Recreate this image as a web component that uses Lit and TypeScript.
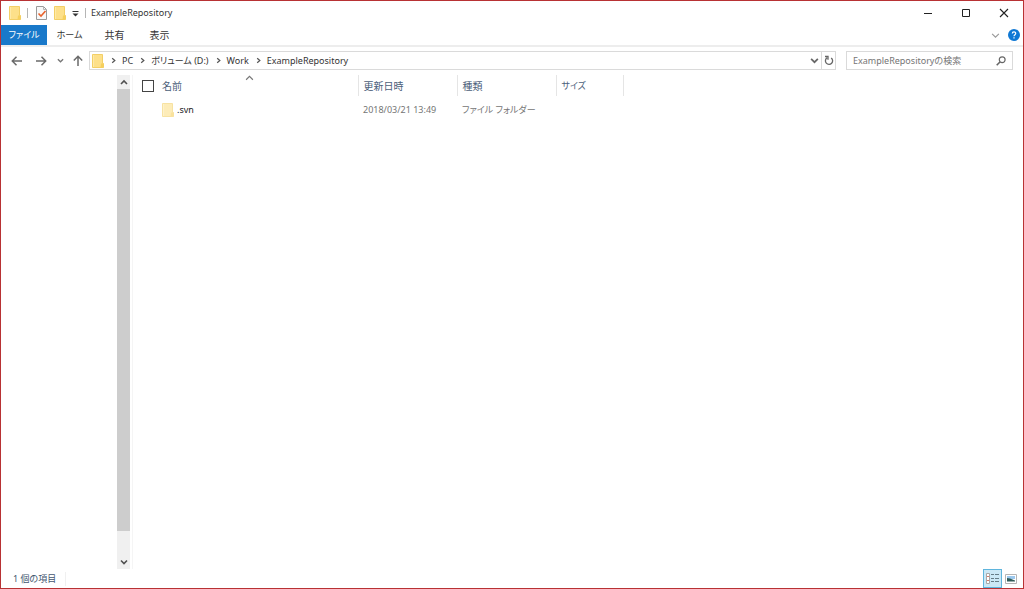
import { LitElement, html, css, svg } from "lit";
import { customElement, property, state } from "lit/decorators.js";

@customElement("folder-icon")
class FolderIcon extends LitElement {
  @property({ type: Boolean, reflect: true }) faded = false;

  static styles = css`
    :host { display: block; flex: none; width: 12px; height: 14px; }
    :host([faded]) { opacity: 0.6; }
    svg { display: block; }
  `;

  render() {
    return html`<svg width="12" height="14" viewBox="0 0 12 14" aria-hidden="true">
      <path d="M0.5 0.5H10.5V9.5H11.5V13.5H0.5Z" fill="#fde08a" stroke="#f3cf66" />
      <path d="M1.5 1V13" stroke="#feeaa8" />
      <path d="M9 9.5H11.5V13.5H8.5Z" fill="#f6d05c" />
    </svg>`;
  }
}

type Row = { name: string; date: string; kind: string; size: string };
type Tab = { label: string; kanji: boolean };

@customElement("app-root")
export class AppRoot extends LitElement {
  @state() private path = ["PC", "ボリューム (D:)", "Work", "ExampleRepository"];
  @state() private tabs: Tab[] = [
    { label: "ホーム", kanji: false },
    { label: "共有", kanji: true },
    { label: "表示", kanji: true },
  ];
  @state() private rows: Row[] = [
    { name: ".svn", date: "2018/03/21 13:49", kind: "ファイル フォルダー", size: "" },
  ];

  static styles = css`
    :host {
      display: flex;
      flex-direction: column;
      box-sizing: border-box;
      height: 100vh;
      border: 1px solid #b83234;
      background: #fff;
      color: #333;
      font: 9px/14px "Noto Sans", "Noto Sans CJK JP", sans-serif;
      font-feature-settings: "palt";
    }
    * { box-sizing: border-box; }
    svg { display: block; flex: none; }
    button, input {
      margin: 0;
      padding: 0;
      border: 0;
      background: none;
      color: inherit;
      font: inherit;
      font-feature-settings: inherit;
    }
    button { display: flex; align-items: center; justify-content: center; }
    .kanji { font-size: 10px; }

    .title-bar { display: flex; align-items: center; flex: none; height: 24px; }
    .quick { display: flex; align-items: center; gap: 6px; padding-left: 8px; }
    .page { padding-left: 1px; }
    .divider { width: 1px; height: 10px; background: #b5b5b5; }
    .title { flex: 1; margin: 0 0 0 5px; font-size: 9px; font-weight: 400; }
    .window-button { width: 38px; height: 24px; }

    .ribbon { display: flex; flex: none; height: 22px; border-bottom: 2px solid #ededed; }
    .tab { width: 45px; height: 20px; white-space: nowrap; }
    .file { width: 46px; background: #1979ca; color: #fff; }
    .ribbon-end { display: flex; align-items: center; gap: 8px; margin-left: auto; padding-right: 3px; }

    .nav { display: flex; align-items: center; flex: none; height: 27px; padding: 0 10px 0 4px; }
    .arrows { display: flex; align-items: center; }
    .arrows button { width: 24px; height: 19px; }
    .arrows .recent { width: 14px; }
    .arrows .up { width: 22px; }
    .address { display: flex; align-items: center; flex: 1; height: 19px; border: 1px solid #dadada; padding-left: 2px; }
    .crumbs { display: flex; align-items: center; flex: 1; margin: 0; padding: 0; list-style: none; }
    .crumbs li { display: flex; align-items: center; }
    .crumbs svg { margin: 0 5px 0 6px; }
    .crumbs a { color: inherit; text-decoration: none; white-space: nowrap; }
    .drop { width: 13px; height: 17px; }
    .refresh { width: 14px; height: 17px; border-left: 1px solid #dadada; }
    .search { display: flex; align-items: center; width: 167px; height: 19px; margin-left: 10px; padding: 0 6px; border: 1px solid #dadada; }
    .search input { flex: 1; min-width: 0; outline: none; }
    .search input::placeholder { color: #757575; opacity: 1; }

    .body { display: flex; flex: 1; min-height: 0; padding-top: 1px; }
    .tree { width: 116px; }
    .scrollbar { display: flex; flex-direction: column; width: 13px; background: #f0f0f0; }
    .scroll-button { width: 13px; height: 14px; }
    .thumb { flex: 1; margin-bottom: 24px; background: #cdcdcd; }
    .files { flex: 1; margin-left: 2px; border-left: 1px solid #f5f5f5; }

    table { width: 491px; border-collapse: collapse; table-layout: fixed; }
    th, td { padding: 0 0 0 5px; text-align: left; font-weight: 400; white-space: nowrap; }
    th { position: relative; height: 21px; border-right: 1px solid #e5e5e5; color: #4c607a; }
    td { height: 28px; color: #757575; }
    .col-name { width: 225px; }
    .col-date, .col-kind { width: 99px; }
    .name-cell { display: flex; align-items: center; gap: 8px; padding-left: 4px; }
    .name-cell input {
      appearance: none;
      width: 12px;
      height: 12px;
      border: 1px solid #444;
      background: #fff;
    }
    .item { display: flex; align-items: center; gap: 3px; padding-left: 24px; color: #222; }
    .sort { position: absolute; top: -2px; left: 50%; }

    .status { display: flex; align-items: center; justify-content: space-between; flex: none; height: 19px; padding: 0 4px 0 12px; color: #42566e; }
    .count { padding-right: 9px; border-right: 1px solid #f0f0f0; }
    .views { display: flex; }
    .view { width: 17px; height: 19px; }
    .view.active { width: 19px; border: 1px solid #5fb5dd; background: #cbe8f6; }
  `;

  private chevron(dir: "up" | "down" | "right", size: number, color: string, width = 1) {
    const d = {
      up: "M1 6L4 3L7 6",
      down: "M1 2.5L4 5.5L7 2.5",
      right: "M2.5 1.5L5.5 4L2.5 6.5",
    }[dir];
    return html`<svg width=${size} height=${size} viewBox="0 0 8 8" aria-hidden="true">
      <path d=${d} fill="none" stroke=${color} stroke-width=${width} />
    </svg>`;
  }

  private arrow(angle: number) {
    return html`<svg width="12" height="12" viewBox="0 0 12 12" aria-hidden="true">
      ${svg`<path d="M11 6H1.5M5.5 1.8L1.3 6L5.5 10.2" transform="rotate(${angle} 6 6)" fill="none" stroke="#6a6a6a" stroke-width="1.5" />`}
    </svg>`;
  }

  render() {
    return html`
      <header class="title-bar">
        <div class="quick">
          <folder-icon></folder-icon>
          <span class="divider"></span>
          <button class="page" aria-label="プロパティ">
            <svg width="13" height="14" viewBox="0 0 13 14">
              <path d="M1.5 0.5H8.5L11.5 3.5V13.5H1.5Z" fill="#f8f8f8" stroke="#999" />
              <path d="M8.5 0.5V3.5H11.5" fill="none" stroke="#b5b5b5" />
              <path d="M3.5 7.5L6 10L10.5 5" fill="none" stroke="#e8622c" stroke-width="1.6" />
            </svg>
          </button>
          <button aria-label="新しいフォルダー"><folder-icon></folder-icon></button>
          <button aria-label="クイック アクセス ツール バーのカスタマイズ">
            <svg width="7" height="7" viewBox="0 0 7 7">
              <path d="M0.5 1.5H6.5" stroke="#333" />
              <path d="M0.5 3.5H6.5L3.5 6.5Z" fill="#333" />
            </svg>
          </button>
          <span class="divider"></span>
        </div>
        <h1 class="title">ExampleRepository</h1>
        <button class="window-button" aria-label="最小化">
          <svg width="10" height="10" viewBox="0 0 10 10"><path d="M1 5.5H9" stroke="#222" /></svg>
        </button>
        <button class="window-button" aria-label="最大化">
          <svg width="10" height="10" viewBox="0 0 10 10"><path d="M1.5 1.5H8.5V8.5H1.5Z" fill="none" stroke="#222" /></svg>
        </button>
        <button class="window-button" aria-label="閉じる">
          <svg width="10" height="10" viewBox="0 0 10 10"><path d="M1 1L9 9M9 1L1 9" stroke="#222" stroke-width="1.1" /></svg>
        </button>
      </header>

      <nav class="ribbon">
        <button class="tab file">ファイル</button>
        ${this.tabs.map((t) => html`<button class="tab ${t.kanji ? "kanji" : ""}">${t.label}</button>`)}
        <div class="ribbon-end">
          <button aria-label="リボンの展開">${this.chevron("down", 9, "#999")}</button>
          <button aria-label="ヘルプ">
            <svg width="12" height="12" viewBox="0 0 12 12">
              <circle cx="6" cy="6" r="6" fill="#0f78d4" />
              <path d="M4.3 4.6C4.3 2.4 7.7 2.4 7.7 4.5C7.7 5.7 6 5.7 6 7.3M6 8.3V9.5" fill="none" stroke="#fff" stroke-width="1.2" />
            </svg>
          </button>
        </div>
      </nav>

      <div class="nav">
        <div class="arrows">
          <button aria-label="戻る">${this.arrow(0)}</button>
          <button aria-label="進む">${this.arrow(180)}</button>
          <button class="recent" aria-label="最近表示した場所">${this.chevron("down", 7, "#777", 1.5)}</button>
          <button class="up" aria-label="上へ">${this.arrow(90)}</button>
        </div>
        <div class="address">
          <folder-icon></folder-icon>
          <ol class="crumbs">
            ${this.path.map((p) => html`<li>${this.chevron("right", 7, "#555", 1.4)}<a href="#">${p}</a></li>`)}
          </ol>
          <button class="drop" aria-label="以前の場所">${this.chevron("down", 9, "#666", 1.5)}</button>
          <button class="refresh" aria-label="更新">
            <svg width="10" height="11" viewBox="0 0 10 11">
              <path d="M3 2.8A3.6 3.6 0 1 0 7.2 2.9M1 1.5H4V4.8" fill="none" stroke="#666" stroke-width="1.3" />
            </svg>
          </button>
        </div>
        <label class="search">
          <input type="text" aria-label="検索" placeholder="ExampleRepositoryの検索" />
          <svg width="10" height="10" viewBox="0 0 10 10">
            <circle cx="6.2" cy="3.7" r="2.9" fill="none" stroke="#666" stroke-width="1.2" />
            <path d="M4.2 5.8L0.7 9.3" stroke="#666" stroke-width="1.6" />
          </svg>
        </label>
      </div>

      <main class="body">
        <aside class="tree"></aside>
        <div class="scrollbar">
          <button class="scroll-button" aria-label="上にスクロール">${this.chevron("up", 8, "#505050", 1.6)}</button>
          <div class="thumb"></div>
          <button class="scroll-button" aria-label="下にスクロール">${this.chevron("down", 8, "#505050", 1.6)}</button>
        </div>
        <section class="files">
          <table>
            <colgroup>
              <col class="col-name" /><col class="col-date" /><col class="col-kind" /><col />
            </colgroup>
            <thead>
              <tr>
                <th class="kanji">
                  <div class="name-cell"><input type="checkbox" aria-label="すべて選択" />名前</div>
                  <span class="sort">${this.chevron("up", 9, "#777")}</span>
                </th>
                <th class="kanji">更新日時</th>
                <th class="kanji">種類</th>
                <th>サイズ</th>
              </tr>
            </thead>
            <tbody>
              ${this.rows.map(
                (r) => html`<tr>
                  <td><div class="item"><folder-icon faded></folder-icon>${r.name}</div></td>
                  <td>${r.date}</td>
                  <td>${r.kind}</td>
                  <td>${r.size}</td>
                </tr>`
              )}
            </tbody>
          </table>
        </section>
      </main>

      <footer class="status">
        <span class="count">${this.rows.length} 個の項目</span>
        <div class="views">
          <button class="view active" aria-label="詳細">
            <svg width="15" height="13" viewBox="0 0 15 13">
              <path d="M1.5 1.5H4.5V11.5H1.5Z" fill="#fff" stroke="#a9a9a9" />
              <path d="M2 4.5H4M2 8.5H4" stroke="#d77c6c" />
              <path d="M6 2.5H9M10 2.5H14M6 6.5H9M10 6.5H14M6 9.5H9M10 9.5H14" stroke="#667d88" />
            </svg>
          </button>
          <button class="view" aria-label="大アイコン">
            <svg width="12" height="10" viewBox="0 0 12 10">
              <path d="M0.5 0.5H11.5V9.5H0.5Z" fill="#fff" stroke="#b5b5b5" />
              <path d="M2 2H10V5H2Z" fill="#9cc8ee" />
              <path d="M2 4L5 4.5L10 6.5V7.5H2Z" fill="#315d58" />
            </svg>
          </button>
        </div>
      </footer>
    `;
  }
}
